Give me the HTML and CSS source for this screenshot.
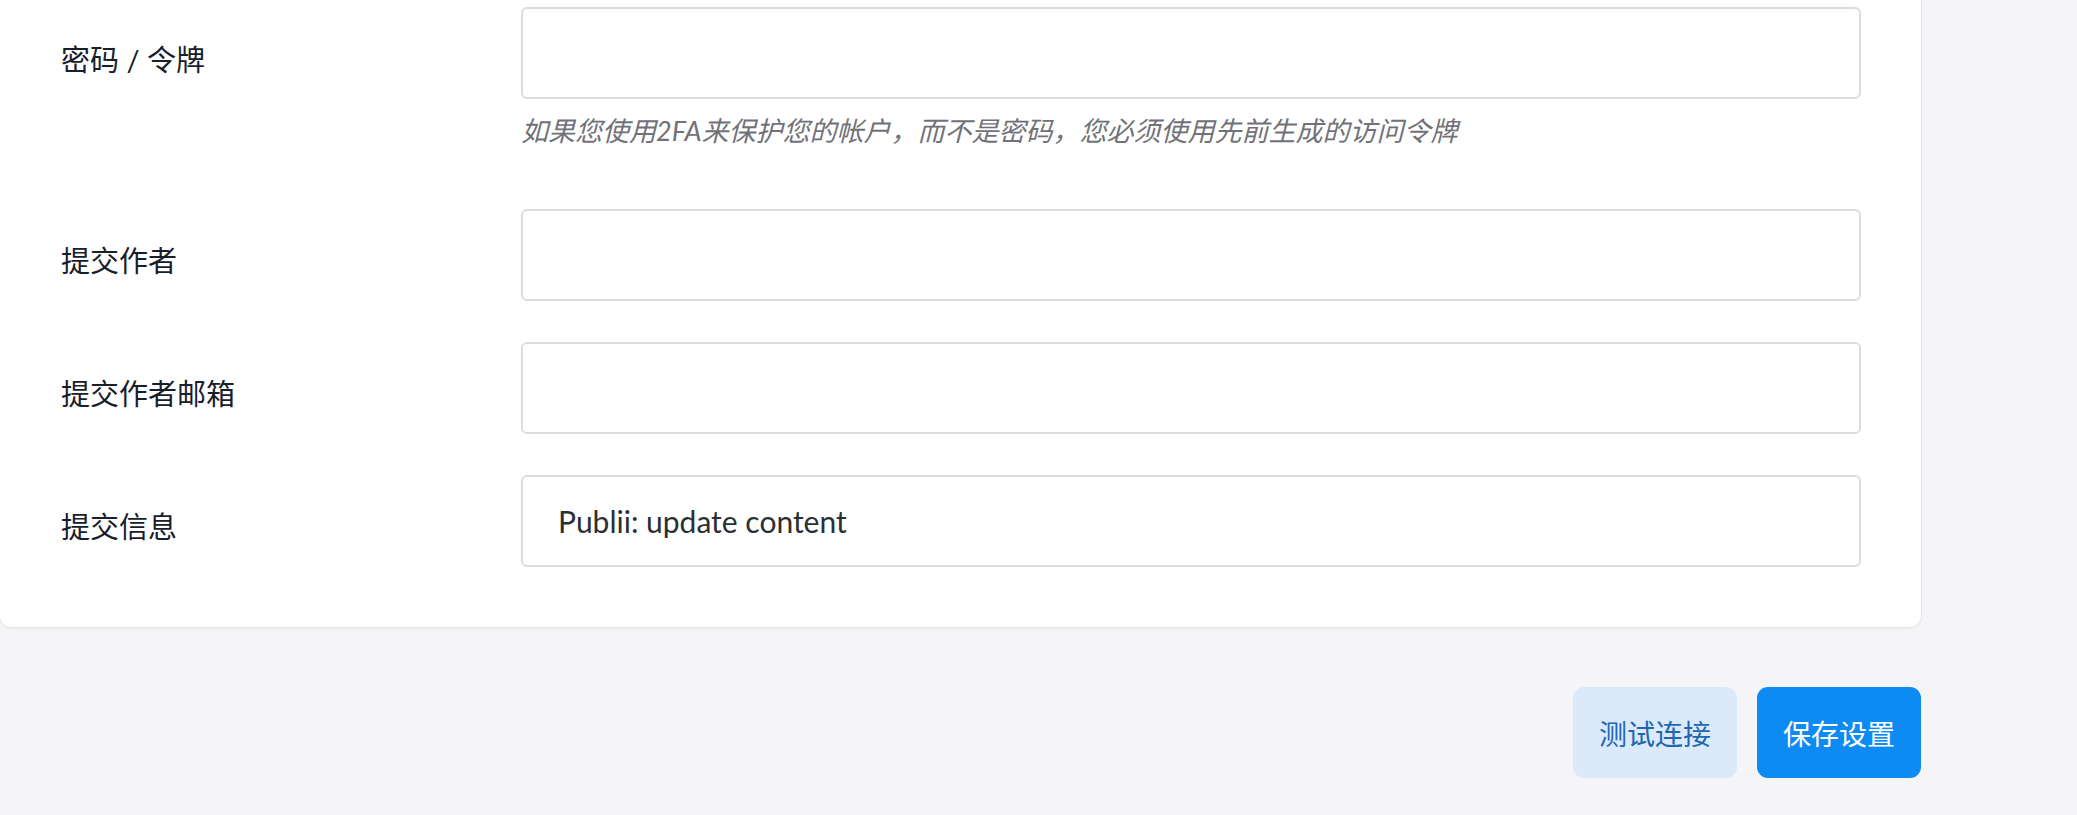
FILE: index.html
```html
<!DOCTYPE html>
<html lang="zh-CN">
<head>
<meta charset="utf-8">
<title>Git 设置</title>
<link rel="stylesheet" href="styles.css">
</head>
<body>
<div class="page">
  <form class="card">
    <div class="row row-first">
      <label class="label" for="pw">密码 / 令牌</label>
      <div class="field">
        <input class="input" id="pw" type="text" value="">
        <p class="help">如果您使用2FA来保护您的帐户，而不是密码，您必须使用先前生成的访问令牌</p>
      </div>
    </div>
    <div class="row">
      <label class="label" for="author">提交作者</label>
      <div class="field">
        <input class="input" id="author" type="text" value="">
      </div>
    </div>
    <div class="row">
      <label class="label" for="email">提交作者邮箱</label>
      <div class="field">
        <input class="input" id="email" type="text" value="">
      </div>
    </div>
    <div class="row">
      <label class="label" for="msg">提交信息</label>
      <div class="field">
        <input class="input" id="msg" type="text" value="Publii: update content">
      </div>
    </div>
  </form>
  <div class="actions">
    <button class="btn btn-light" type="button">测试连接</button>
    <button class="btn btn-primary" type="button">保存设置</button>
  </div>
</div>
</body>
</html>
```
FILE: styles.css
```css
html, body {
  margin: 0;
  padding: 0;
  background: #f5f5f7;
  font-family: "Lato", "Noto Sans CJK SC", sans-serif;
}

.page {
  width: 1921px;
}

.card {
  background: #ffffff;
  border-radius: 0 0 11px 11px;
  box-shadow: 0 0 0 1px rgba(0, 0, 0, 0.045), 0 2px 4px rgba(0, 0, 0, 0.03);
  margin-top: -60px;
  padding: 67px 60px 60px 61px;
  box-sizing: border-box;
}

.row {
  display: grid;
  grid-template-columns: 460px 1fr;
  align-items: start;
  margin-bottom: 41px;
}

.row:last-child {
  margin-bottom: 0;
}

.label {
  font-size: 29px;
  line-height: 43px;
  color: #17202a;
  padding-top: 30px;
}

.row-first .label {
  padding-top: 31px;
}

.field {
  display: flex;
  flex-direction: column;
}

.input {
  box-sizing: border-box;
  height: 92px;
  width: 100%;
  border: 2px solid #dcdcde;
  border-radius: 6px;
  padding: 0 35px;
  font-family: "Lato", "Noto Sans CJK SC", sans-serif;
  font-size: 30px;
  color: #2b2f33;
  background: #ffffff;
  outline: none;
}

.help {
  margin: 11px 0 17px;
  font-size: 27px;
  line-height: 41px;
  font-style: italic;
  color: #717279;
}

.actions {
  display: flex;
  justify-content: flex-end;
  gap: 20px;
  margin-top: 60px;
}

.btn {
  width: 164px;
  height: 91px;
  border: none;
  border-radius: 11px;
  font-family: "Lato", "Noto Sans CJK SC", sans-serif;
  font-size: 28px;
  padding: 0;
  cursor: pointer;
}

.btn-light {
  background: #daeafb;
  color: #2167b0;
}

.btn-primary {
  background: #0d8bf2;
  color: #ffffff;
}
```
